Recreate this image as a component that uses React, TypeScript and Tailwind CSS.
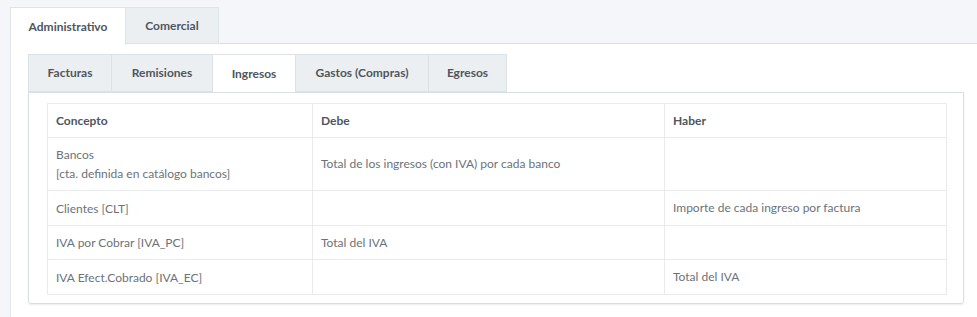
import React from "react";

const rows: [string[], string, string][] = [
  [["Bancos", "[cta. definida en catálogo bancos]"], "Total de los ingresos (con IVA) por cada banco", ""],
  [["Clientes [CLT]"], "", "Importe de cada ingreso por factura"],
  [["IVA por Cobrar [IVA_PC]"], "Total del IVA", ""],
  [["IVA Efect.Cobrado [IVA_EC]"], "", "Total del IVA"],
];
const heights = ["h-[53px]", "h-[35px]", "h-[34px]", "h-[35px]"];

export default function App() {
  return (
    <div className="w-[977px] h-[317px] overflow-hidden bg-[#f4f6f9] pl-[10px] pt-[7px] text-[12px] text-[#6c7379]" style={{ fontFamily: '"Source Sans Pro", Lato, "Noto Sans", sans-serif' }}>
      <div className="flex h-[37px]">
        <div className="w-[116px] bg-white border border-b-0 border-[#dfe4e7] flex items-center justify-center font-bold text-[#4f565d] relative z-10 h-[38px]">Administrativo</div>
        <div className="w-[93px] bg-[#eceff1] border border-l-0 border-[#dfe4e7] flex items-center justify-center font-bold text-[#4f565d]">Comercial</div>
        <div className="flex-1 border-b border-[#dcdfe2]"></div>
      </div>
      <div className="bg-white border-l border-[#e2e6e9] h-[300px] pl-[17px] pt-[10px] pr-[13px]">
        <div className="flex h-[38px]">
          {[
            ["Facturas", "w-[83px]", false],
            ["Remisiones", "w-[101px]", false],
            ["Ingresos", "w-[83px]", true],
            ["Gastos (Compras)", "w-[133px]", false],
            ["Egresos", "w-[79px]", false],
          ].map(([t, w, a]) => (
            <div key={t as string} className={`${w} ${a ? "bg-white h-[39px] relative z-10" : "bg-[#eceff1]"} border border-r-0 last:border-r border-[#dce2e5] flex items-center justify-center font-bold text-[#4f565d]`}>{t}</div>
          ))}
        </div>
        <div className="border border-[#d7dfe3] rounded-b-[3px] shadow-[0_1px_2px_rgba(0,0,0,0.08)] h-[212px] pl-[18px] pt-[10px] pr-[18px]">
          <table className="w-[899px] border-collapse table-fixed">
            <colgroup>
              <col className="w-[265px]" />
              <col className="w-[352px]" />
              <col className="w-[282px]" />
            </colgroup>
            <thead>
              <tr className="h-[34px]">
                {["Concepto", "Debe", "Haber"].map((h) => (
                  <th key={h} className="border border-[#e8eaec] text-left font-bold text-[#4f565d] px-[8px] align-middle">{h}</th>
                ))}
              </tr>
            </thead>
            <tbody>
              {rows.map(([c, d, h], i) => (
                <tr key={i} className={heights[i]}>
                  <td className="border border-[#e8eaec] px-[8px] align-middle leading-[19px]">
                    {c.map((l) => (<div key={l}>{l}</div>))}
                  </td>
                  <td className="border border-[#e8eaec] px-[8px] align-middle">{d}</td>
                  <td className="border border-[#e8eaec] px-[8px] align-middle">{h}</td>
                </tr>
              ))}
            </tbody>
          </table>
        </div>
      </div>
    </div>
  );
}
